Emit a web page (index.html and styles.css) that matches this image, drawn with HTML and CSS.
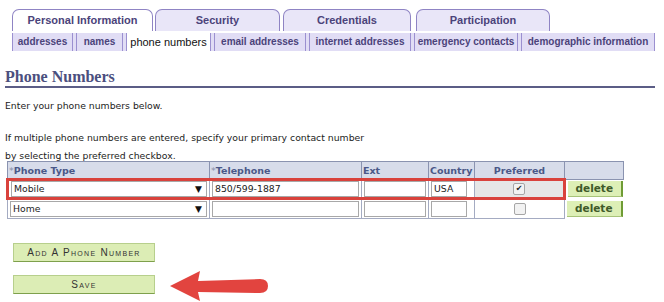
FILE: index.html
```html
<!DOCTYPE html>
<html>
<head>
<title>Phone Numbers</title>
<meta charset='utf-8'/>
<link rel="stylesheet" href="styles.css">
</head>
<body>
<div class="page">
	<!-- top tabs -->
	<div class="tabs">
		<div class="tab active t1">Personal Information</div>
		<div class="tab t2">Security</div>
		<div class="tab t3">Credentials</div>
		<div class="tab t4">Participation</div>
	</div>
	<div class="subtabs">
		<span class="sub s1">addresses</span>
		<span class="sub s2">names</span>
		<span class="sub s3 on">phone numbers</span>
		<span class="sub s4">email addresses</span>
		<span class="sub s5">internet addresses</span>
		<span class="sub s6">emergency contacts</span>
		<span class="sub s7">demographic information</span>
	</div>

	<h2 class="title">Phone Numbers</h2>
	<p class="txt">Enter your phone numbers below.</p>
	<p class="txt second">If multiple phone numbers are entered, specify your primary contact number<br>by selecting the preferred checkbox.</p>

	<table class="phones">
		<colgroup>
			<col class="c1"><col class="c2"><col class="c3"><col class="c4"><col class="c5"><col class="c6">
		</colgroup>
		<tr class="head">
			<th><span class="req">*</span>Phone Type</th>
			<th><span class="req">*</span>Telephone</th>
			<th>Ext</th>
			<th>Country</th>
			<th class="mid">Preferred</th>
			<th></th>
		</tr>
		<tr class="row hl">
			<td><div class="sel">Mobile<span class="dd">&#9660;</span></div></td>
			<td><div class="inp">850/599-1887</div></td>
			<td><div class="inp">&nbsp;</div></td>
			<td><div class="inp short">USA</div></td>
			<td class="mid grey"><span class="chk">&#10004;</span></td>
			<td class="btncell"><span class="del">delete</span></td>
		</tr>
		<tr class="row">
			<td><div class="sel">Home<span class="dd">&#9660;</span></div></td>
			<td><div class="inp">&nbsp;</div></td>
			<td><div class="inp">&nbsp;</div></td>
			<td><div class="inp short">&nbsp;</div></td>
			<td class="mid"><span class="chk"></span></td>
			<td class="btncell"><span class="del">delete</span></td>
		</tr>
	</table>

	<div class="actions">
		<div class="gbtn">Add A Phone Number</div>
		<div class="saverow">
			<div class="gbtn">Save</div>
			<svg class="arrow" width="100" height="32" viewBox="0 0 100 32">
				<path d="M1 16 L31 1 L29 11 L91 9 Q99 9 99 16 Q99 23 91 23 L29 22 L31 31 Z" fill="#e2443f"/>
			</svg>
		</div>
	</div>
</div>
</body>
</html>
```

FILE: styles.css
```css
body {
	margin: 0;
	background: #fff;
	font-family: "DejaVu Sans", Verdana, sans-serif;
	font-size: 9.3px;
	color: #222;
}
.page {
	padding: 9px 9px 0 5px;
}
.tabs {
	display: flex;
	padding-left: 7px;
	height: 22px;
}
.tab {
	box-sizing: border-box;
	height: 22px;
	line-height: 21px;
	text-align: center;
	border: 1px solid #8f84c4;
	border-bottom: none;
	border-radius: 7px 7px 0 0;
	background: #e9e6f8;
	font-family: "Liberation Sans", Arial, sans-serif;
	font-size: 11px;
	font-weight: bold;
	color: #4b437a;
}
.tab.active {
	background: #fff;
}
.t1 { width: 141px; }
.t2 { width: 125px; margin-left: 2px; }
.t3 { width: 128px; margin-left: 3px; }
.t4 { width: 134px; margin-left: 5px; }
.subtabs {
	display: flex;
	gap: 3px;
	margin: 2px 0 0 7px;
	width: 643px;
	height: 18px;
	background: #e1ddf5;
}
.sub {
	box-sizing: border-box;
	border-left: 1px solid #9b90d0;
	border-right: 1px solid #9b90d0;
	text-align: center;
	white-space: nowrap;
	line-height: 18px;
	font-family: "Liberation Sans", Arial, sans-serif;
	font-size: 10px;
	font-weight: bold;
	color: #4b437a;
}
.sub.on {
	background: #fff;
	font-weight: normal;
	font-size: 11px;
	color: #111;
}
.s1 { width: 61px; }
.s2 { width: 47px; }
.s3 { width: 85px; }
.s4 { width: 92px; }
.s5 { width: 102px; }
.s6 { width: 104px; }
.s7 { width: 134px; }
.title {
	margin: 17px 0 0 0;
	width: 650px;
	padding-bottom: 0;
	border-bottom: 2px solid #5b5d86;
	font-family: "Liberation Serif", Georgia, serif;
	font-size: 16px;
	font-weight: bold;
	color: #4b4f7e;
}
.txt {
	margin: 9px 0 0 0;
	line-height: 18px;
}
.txt.second {
	margin-top: 14px;
}
.phones {
	border-collapse: collapse;
	table-layout: fixed;
	width: 616px;
	margin: -4px 0 0 1px;
}
.c1 { width: 202px; }
.c2 { width: 152px; }
.c3 { width: 67px; }
.c4 { width: 46px; }
.c5 { width: 90px; }
.c6 { width: 59px; }
.phones th {
	height: 16px;
	padding: 0 1px;
	background: #d7dcea;
	border: 1px solid #8a93b0;
	text-align: left;
	font-size: 9.5px;
	font-weight: bold;
	color: #4a5888;
}
.phones th.mid { text-align: center; }
.req {
	color: #8a8fa8;
	font-weight: normal;
}
.phones td {
	height: 18px;
	padding: 0 2px;
	border: 1px solid #a4abc2;
}
.row.hl td {
	height: 16px;
	border-top: 3px solid #d9423c;
	border-bottom: 3px solid #d9423c;
}
.row.hl td:first-child { border-left: 3px solid #d9423c; }
.row.hl td:nth-child(5) { border-right: 3px solid #d9423c; }
.phones td.btncell {
	border: none;
	padding: 0 1px 0 2px;
}
.phones td.mid { text-align: center; }
.phones td.grey { background: #e6e6e6; }
.sel {
	position: relative;
	height: 14px;
	line-height: 14px;
	border: 1px solid #a8a8a8;
	background: #fff;
	padding-left: 2px;
}
.dd {
	position: absolute;
	right: 4px;
	top: 0;
	font-size: 9px;
	color: #111;
}
.inp {
	height: 14px;
	line-height: 14px;
	border: 1px solid #a8a8a8;
	background: #fff;
	padding-left: 2px;
}
.inp.short { width: 32px; }
.chk {
	display: inline-block;
	width: 10px;
	height: 10px;
	border: 1px solid #a6a6a6;
	border-radius: 2px;
	background: #f2f2f2;
	font-size: 8px;
	line-height: 10px;
	text-align: center;
	vertical-align: middle;
}
.del {
	display: block;
	height: 15px;
	line-height: 15px;
	background: #ddefb6;
	border-right: 2px solid #6f9c35;
	border-bottom: 1px solid #a8c47a;
	text-align: center;
	font-weight: bold;
	font-size: 10.5px;
	color: #3f5a2a;
}
.actions {
	margin: 24px 0 0 8px;
}
.gbtn {
	width: 140px;
	height: 17px;
	line-height: 17px;
	background: #dcedb5;
	border: 1px solid #b7cf8c;
	border-bottom-color: #7ea04c;
	text-align: center;
	font-family: "Liberation Sans", Arial, sans-serif;
	font-size: 10px;
	font-variant: small-caps;
	letter-spacing: 1.3px;
	color: #333;
}
.saverow {
	display: flex;
	align-items: center;
	gap: 14px;
	margin-top: 5px;
}
.arrow {
	margin-top: 3px;
}
```
